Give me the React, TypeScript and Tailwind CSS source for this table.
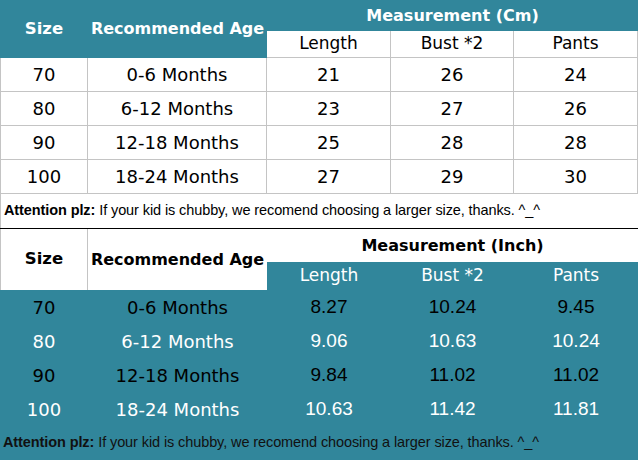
import React from "react";

const comic = "font-['DejaVu_Sans',sans-serif]";
const arial = "font-['Liberation_Sans',Arial,sans-serif]";
const line = "border-[#c4c4c4]";

const cmRows = [
  ["70", "0-6 Months", "21", "26", "24"],
  ["80", "6-12 Months", "23", "27", "26"],
  ["90", "12-18 Months", "25", "28", "28"],
  ["100", "18-24 Months", "27", "29", "30"],
];

const inRows = [
  ["70", "0-6 Months", "8.27", "10.24", "9.45"],
  ["80", "6-12 Months", "9.06", "10.63", "10.24"],
  ["90", "12-18 Months", "9.84", "11.02", "11.02"],
  ["100", "18-24 Months", "10.63", "11.42", "11.81"],
];

function Attention({ teal }: { teal?: boolean }) {
  return (
    <div
      className={`col-span-5 flex items-center pl-[3px] text-[14.5px] tracking-[-0.1px] ${arial} ${
        teal ? "bg-[#31869b] text-[#111]" : "bg-white text-black border-l border-[#c4c4c4]"
      }`}
    >
      <span className="font-bold">Attention plz:</span>
      <span className="ml-[4px]">If your kid is chubby, we recomend choosing a larger size, thanks. ^_^</span>
    </div>
  );
}

export default function App() {
  return (
    <div className="w-[641px] h-[463px] bg-white overflow-hidden">
      <div className="w-[638px]">
        {/* Top table (Cm) */}
        <div className="grid grid-cols-[88px_179px_124px_123px_124px] grid-rows-[31px_27px_34px_34px_34px_34px_34px]">
          <div className={`row-span-2 bg-[#31869b] text-white font-bold text-[16.5px] flex items-center justify-center ${comic}`}>
            Size
          </div>
          <div className={`row-span-2 bg-[#31869b] text-white font-bold text-[16px] flex items-center justify-center ${comic}`}>
            Recommended Age
          </div>
          <div className={`col-span-3 bg-[#31869b] text-white font-bold text-[16px] flex items-center justify-center ${comic}`}>
            Measurement (Cm)
          </div>
          {["Length", "Bust *2", "Pants"].map((h) => (
            <div
              key={h}
              className={`bg-white text-black text-[17px] flex items-center justify-center border-r border-b ${line} ${comic}`}
            >
              {h}
            </div>
          ))}
          {cmRows.map((r) =>
            r.map((v, i) => (
              <div
                key={r[0] + "-" + i}
                className={`bg-white text-black text-[18px] flex items-center justify-center border-r border-b ${line} ${
                  i === 0 ? "border-l" : ""
                } ${comic}`}
              >
                {v}
              </div>
            ))
          )}
          <Attention />
        </div>

        <div className="h-[3px] bg-black -mt-[2px]" />

        {/* Bottom table (Inch) */}
        <div className="grid grid-cols-[88px_179px_124px_123px_124px] grid-rows-[33px_28px_34px_34px_34px_34px_34px]">
          <div className={`row-span-2 bg-white text-black font-bold text-[16.5px] flex items-center justify-center border-l border-r ${line} ${comic}`}>
            Size
          </div>
          <div className={`row-span-2 bg-white text-black font-bold text-[16px] flex items-center justify-center ${comic}`}>
            Recommended Age
          </div>
          <div className={`col-span-3 bg-white text-black font-bold text-[16px] flex items-center justify-center ${comic}`}>
            Measurement (Inch)
          </div>
          {["Length", "Bust *2", "Pants"].map((h) => (
            <div
              key={h}
              className={`bg-[#31869b] text-white text-[17px] flex items-center justify-center ${comic}`}
            >
              {h}
            </div>
          ))}
          {inRows.map((r, ri) =>
            r.map((v, i) => (
              <div
                key={r[0] + "-" + i}
                className={`bg-[#31869b] flex items-center justify-center ${
                  ri % 2 === 0 ? "text-black" : "text-white"
                } ${i < 2 ? `text-[18px] ${comic}` : `text-[19px] ${arial}`}`}
              >
                {v}
              </div>
            ))
          )}
          <Attention teal />
        </div>
      </div>
    </div>
  );
}
